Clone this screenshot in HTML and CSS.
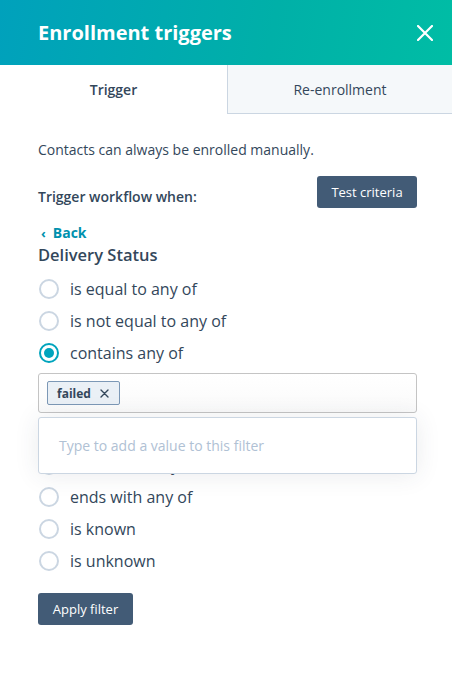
FILE: index.html
```html
<!DOCTYPE html>
<html>
<head>
<meta charset="utf-8">
<link rel="stylesheet" href="styles.css">
</head>
<body>
<div class="panel">
  <header class="header">
    <h1 class="title">Enrollment triggers</h1>
    <button class="close" aria-label="Close">
      <svg width="16" height="16" viewBox="0 0 16 16"><path d="M1 1L15 15M15 1L1 15" stroke="#fff" stroke-width="2.2" stroke-linecap="round"/></svg>
    </button>
  </header>
  <nav class="tabs">
    <div class="tab tab-active">Trigger</div>
    <div class="tab tab-inactive">Re-enrollment</div>
  </nav>
  <main class="content">
    <p class="intro">Contacts can always be enrolled manually.</p>
    <div class="trigger-row">
      <span class="trigger-label">Trigger workflow when:</span>
      <button class="btn btn-test">Test criteria</button>
    </div>
    <a class="back"><span class="chev">‹</span>Back</a>
    <h2 class="prop">Delivery Status</h2>
    <ul class="options">
      <li class="opt"><span class="radio"></span>is equal to any of</li>
      <li class="opt"><span class="radio"></span>is not equal to any of</li>
      <li class="opt"><span class="radio radio-on"></span>contains any of</li>
      <li class="field-wrap">
        <div class="field">
          <span class="tag">failed <svg width="9" height="9" viewBox="0 0 9 9"><path d="M1 1L8 8M8 1L1 8" stroke="#33475b" stroke-width="1.4" stroke-linecap="round"/></svg></span>
        </div>
        <div class="dropdown">Type to add a value to this filter</div>
      </li>
      <li class="opt"><span class="radio"></span>starts with any of</li>
      <li class="opt"><span class="radio"></span>ends with any of</li>
      <li class="opt"><span class="radio"></span>is known</li>
      <li class="opt"><span class="radio"></span>is unknown</li>
    </ul>
    <button class="btn btn-apply">Apply filter</button>
  </main>
</div>
</body>
</html>
```

FILE: styles.css
```css
* { box-sizing: border-box; }
body {
  margin: 0;
  background: #fff;
  font-family: "Open Sans", "Noto Sans", sans-serif;
  color: #33475b;
}
.panel { width: 452px; }
.header {
  height: 65px;
  display: flex;
  align-items: center;
  justify-content: space-between;
  padding: 0 19px 0 38px;
  background: linear-gradient(100deg, #00a1bc 0%, #00b0a8 60%, #00bda5 100%);
}
.title {
  margin: 0;
  color: #fff;
  font-size: 20px;
  font-weight: 700;
}
.close {
  border: 0;
  background: none;
  padding: 0;
  width: 16px;
  height: 16px;
  display: flex;
}
.tabs {
  display: grid;
  grid-template-columns: 227px 1fr;
  height: 49px;
}
.tab {
  display: flex;
  align-items: center;
  justify-content: center;
  font-size: 14px;
  color: #33475b;
}
.tab-active { font-weight: 600; }
.tab-inactive {
  background: #f5f8fa;
  border-left: 1px solid #cbd6e2;
  border-bottom: 1px solid #cbd6e2;
}
.content { padding: 0 35px 0 38px; }
.intro {
  margin: 26px 0 0;
  font-size: 14px;
  line-height: 20px;
}
.trigger-row {
  display: flex;
  align-items: center;
  justify-content: space-between;
  margin-top: 16px;
}
.trigger-label {
  font-size: 14px;
  font-weight: 600;
  margin-top: 8px;
}
.btn {
  border: 0;
  border-radius: 3px;
  background: #425b76;
  color: #fff;
  font-family: inherit;
  font-size: 13px;
  height: 32px;
  padding: 0;
}
.btn-test { width: 100px; }
.back {
  display: flex;
  align-items: center;
  margin-top: 15px;
  color: #0091ae;
  font-weight: 700;
  font-size: 14px;
  line-height: 20px;
}
.chev { font-size: 13px; margin: 0 7px 0 3px; font-weight: 700; }
.prop {
  margin: 1px 0 0;
  font-size: 16.5px;
  line-height: 22px;
  font-weight: 600;
}
.options {
  list-style: none;
  margin: 7px 0 0;
  padding: 0;
}
.opt {
  height: 32px;
  display: flex;
  align-items: center;
  font-size: 16px;
}
.radio {
  width: 20px;
  height: 20px;
  border: 2px solid #cbd6e2;
  border-radius: 50%;
  margin: 0 11px 0 1px;
  flex: none;
  display: flex;
  align-items: center;
  justify-content: center;
}
.radio-on { border-color: #00a4bd; }
.radio-on::after {
  content: "";
  width: 10px;
  height: 10px;
  border-radius: 50%;
  background: #00a4bd;
}
.field-wrap {
  position: relative;
  padding-top: 4px;
  height: 80px;
}
.field {
  height: 40px;
  border: 1px solid #c4c4c4;
  border-radius: 3px;
  background: linear-gradient(#fff, #fafafa);
  display: flex;
  align-items: center;
  padding: 0 8px;
}
.tag {
  display: inline-flex;
  align-items: center;
  gap: 9px;
  height: 24px;
  padding: 0 10px 0 9px;
  background: #eaf0f6;
  border: 1px solid #7c98b6;
  border-radius: 2px;
  font-size: 12px;
  font-weight: 700;
}
.dropdown {
  position: absolute;
  left: 0;
  right: 0;
  top: 48px;
  height: 57px;
  background: #fff;
  border: 1px solid #cbd6e2;
  border-radius: 3px;
  box-shadow: 0 1px 24px rgba(45, 62, 80, 0.10);
  display: flex;
  align-items: center;
  padding-left: 20px;
  font-size: 14px;
  color: #b0c1d4;
  z-index: 2;
}
.btn-apply { margin-top: 16px; width: 95px; }
```
